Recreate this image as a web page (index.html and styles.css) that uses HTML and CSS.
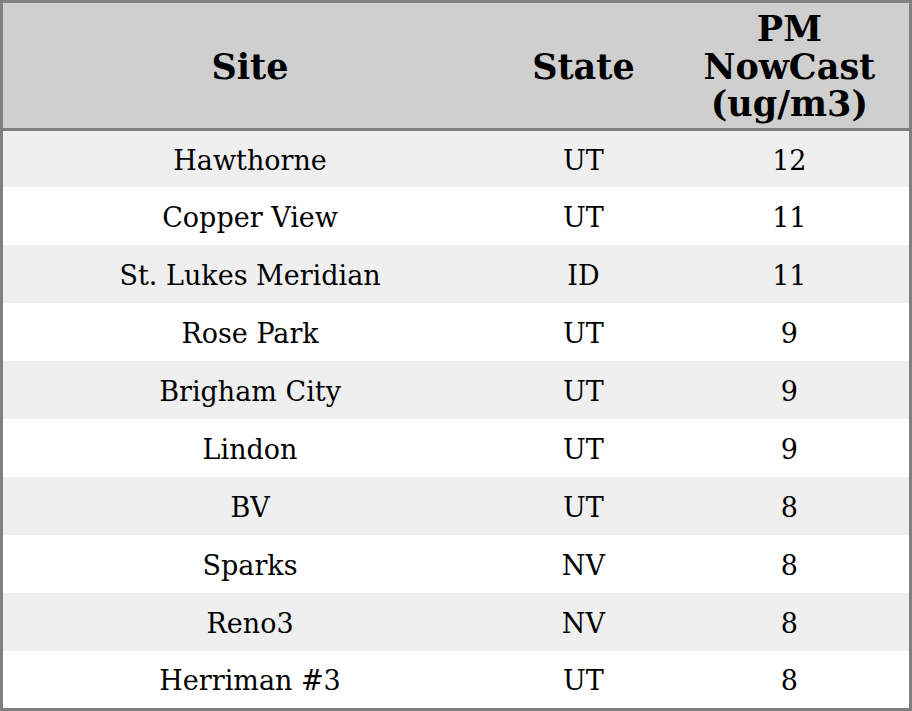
FILE: index.html
```html
<!DOCTYPE html>
<html>
<head>
<meta charset="utf-8">
<link rel="stylesheet" href="styles.css">
</head>
<body>
<table class="aq">
  <colgroup>
    <col class="c-site">
    <col class="c-state">
    <col class="c-pm">
  </colgroup>
  <thead>
    <tr><th>Site</th><th>State</th><th>PM NowCast (ug/m3)</th></tr>
  </thead>
  <tbody>
    <tr><td>Hawthorne</td><td>UT</td><td>12</td></tr>
    <tr><td>Copper View</td><td>UT</td><td>11</td></tr>
    <tr><td>St. Lukes Meridian</td><td>ID</td><td>11</td></tr>
    <tr><td>Rose Park</td><td>UT</td><td>9</td></tr>
    <tr><td>Brigham City</td><td>UT</td><td>9</td></tr>
    <tr><td>Lindon</td><td>UT</td><td>9</td></tr>
    <tr><td>BV</td><td>UT</td><td>8</td></tr>
    <tr><td>Sparks</td><td>NV</td><td>8</td></tr>
    <tr><td>Reno3</td><td>NV</td><td>8</td></tr>
    <tr><td>Herriman #3</td><td>UT</td><td>8</td></tr>
  </tbody>
</table>
</body>
</html>
```
FILE: styles.css
```css
html, body {
  margin: 0;
  padding: 0;
  background: #ffffff;
}
.aq {
  width: 912px;
  border-collapse: collapse;
  border: 3px solid #808080;
  font-family: "DejaVu Serif", serif;
  color: #000;
  table-layout: fixed;
}
.c-site { width: 494px; }
.c-state { width: 172px; }
.c-pm { width: 240px; }
.aq th {
  background: #cfcfcf;
  font-size: 35px;
  font-weight: bold;
  line-height: 37.5px;
  padding: 7px 28px 5px;
  text-align: center;
  vertical-align: middle;
  border-bottom: 3px solid #808080;
}
.aq tbody tr {
  height: 58px;
}
.aq td {
  font-size: 27px;
  line-height: 32px;
  padding: 4px 0 0;
  text-align: center;
  vertical-align: middle;
}
.aq tbody tr:nth-child(odd) td {
  background: #efefef;
}
```
